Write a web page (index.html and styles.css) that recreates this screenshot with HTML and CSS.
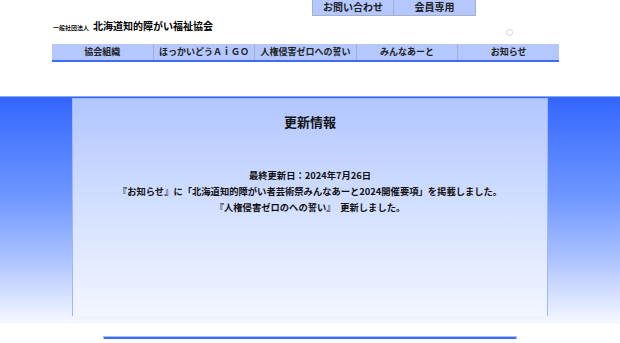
FILE: index.html
```html
<!DOCTYPE html>
<html lang="ja">
  <head>
    <meta charset="UTF-8" />
    <meta name="viewport" content="width=device-width, initial-scale=1.0" />
    <title>一般社団法人 北海道知的障がい福祉協会</title>
    <link rel="stylesheet" href="styles.css">
  </head>
  <body>
    <div class="header">
      <div class="toplinks">
        <a href="#" class="toplink">お問い合わせ</a>
        <a href="#" class="toplink">会員専用</a>
      </div>
      <div class="logo">
        <span class="logo-small">一般社団法人</span>
        <span class="logo-main">北海道知的障がい福祉協会</span>
      </div>
      <span class="dot"></span>
      <ul class="nav">
        <li><a href="#">協会組織</a></li>
        <li><a href="#">ほっかいどうＡｉＧＯ</a></li>
        <li><a href="#">人権侵害ゼロへの誓い</a></li>
        <li><a href="#">みんなあーと</a></li>
        <li><a href="#">お知らせ</a></li>
      </ul>
    </div>

    <div class="band">
      <div class="panel">
        <h2>更新情報</h2>
        <div class="news">
          <p>最終更新日：2024年7月26日</p>
          <p>『お知らせ』に「北海道知的障がい者芸術祭みんなあーと2024開催要項」を掲載しました。</p>
          <p>『人権侵害ゼロのへの誓い』　更新しました。</p>
        </div>
      </div>
    </div>

    <div class="footer-line"></div>
  </body>
</html>
```

FILE: styles.css
```css
body {
  font-family: "Noto Sans CJK JP", "Liberation Sans", sans-serif;
  background-color: #fff;
  color: #111;
  margin: 0;
  padding: 0;
}

a {
  color: #222;
  text-decoration: none;
}

.header {
  position: relative;
  width: 507px;
  margin-left: 52px;
  height: 96px;
}

.toplinks {
  display: flex;
  margin-left: 260px;
  height: 16px;
}

.toplink {
  display: block;
  box-sizing: border-box;
  width: 82px;
  height: 16px;
  line-height: 14px;
  text-align: center;
  font-size: 10px;
  font-weight: bold;
  background-color: #b4c8ff;
  border: 1px solid #a9b0c4;
  border-top: none;
}

.toplink + .toplink {
  border-left: none;
}

.logo {
  display: flex;
  align-items: baseline;
  gap: 4px;
  margin-top: 3px;
  padding-left: 1px;
  height: 14px;
  line-height: 14px;
}

.logo-small {
  font-size: 6px;
  font-weight: bold;
}

.logo-main {
  font-size: 10px;
  font-weight: bold;
  color: #000;
}

.dot {
  position: absolute;
  left: 454px;
  top: 29px;
  width: 5px;
  height: 5px;
  border: 1px solid #d4d4d4;
  border-radius: 50%;
}

.nav {
  list-style: none;
  display: flex;
  margin: 11px 0 0;
  padding: 0;
  height: 16px;
  background-color: #b4c8ff;
  border-bottom: 2px solid #3d6df5;
}

.nav li {
  flex: 1;
  min-width: 0;
  text-align: center;
  font-size: 9px;
  font-weight: bold;
  line-height: 16px;
  white-space: nowrap;
  border-right: 1px solid #a4b0cc;
}

.nav li:last-child {
  border-right: none;
}

.band {
  border-top: 1px solid #8aa8ff;
  height: 227px;
  background: linear-gradient(#3366ff 0%, #6f98ff 45%, #a8c0ff 70%, #f7f9ff 100%);
}

.panel {
  box-sizing: border-box;
  width: 476px;
  height: 218px;
  margin: 1px 0 0 72px;
  border: 1px solid #9db6ff;
  border-bottom: none;
  background: linear-gradient(#b2c6ff 0%, #d6e2ff 55%, #f3f6ff 100%);
  text-align: center;
}

h2 {
  margin: 14px 0 0;
  font-size: 13px;
  font-weight: bold;
  line-height: 18px;
  color: #111;
}

.news {
  margin-top: 36px;
}

.news p {
  margin: 0;
  font-size: 9.3px;
  font-weight: bold;
  line-height: 16px;
}

.footer-line {
  width: 412px;
  height: 2px;
  margin: 13px 0 0 104px;
  background-color: #3d6df5;
  box-shadow: 0 0 0 1px #a9c0ff;
}
```
